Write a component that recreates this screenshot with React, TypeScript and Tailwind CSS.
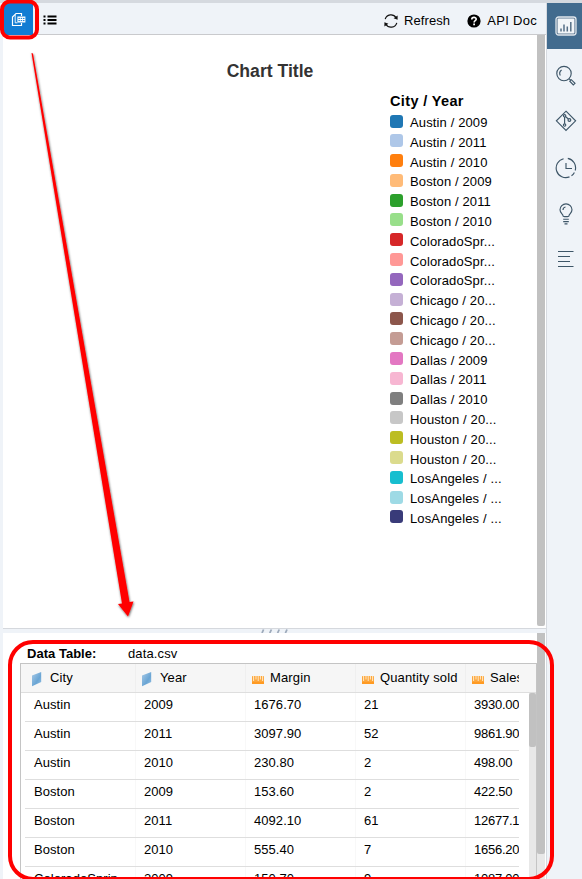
import React from "react";

const legend: [string, string][] = [
  ["Austin / 2009", "#1f77b4"],
  ["Austin / 2011", "#aec7e8"],
  ["Austin / 2010", "#ff7f0e"],
  ["Boston / 2009", "#ffbb78"],
  ["Boston / 2011", "#2ca02c"],
  ["Boston / 2010", "#98df8a"],
  ["ColoradoSpr...", "#d62728"],
  ["ColoradoSpr...", "#ff9896"],
  ["ColoradoSpr...", "#9467bd"],
  ["Chicago / 20...", "#c5b0d5"],
  ["Chicago / 20...", "#8c564b"],
  ["Chicago / 20...", "#c49c94"],
  ["Dallas / 2009", "#e377c2"],
  ["Dallas / 2011", "#f7b6d2"],
  ["Dallas / 2010", "#7f7f7f"],
  ["Houston / 20...", "#c7c7c7"],
  ["Houston / 20...", "#bcbd22"],
  ["Houston / 20...", "#dbdb8d"],
  ["LosAngeles / ...", "#17becf"],
  ["LosAngeles / ...", "#9edae5"],
  ["LosAngeles / ...", "#393b79"],
];

const columns: [string, "dim" | "measure"][] = [
  ["City", "dim"],
  ["Year", "dim"],
  ["Margin", "measure"],
  ["Quantity sold", "measure"],
  ["Sales", "measure"],
];

const rows = [
  ["Austin", "2009", "1676.70", "21", "3930.00"],
  ["Austin", "2011", "3097.90", "52", "9861.90"],
  ["Austin", "2010", "230.80", "2", "498.00"],
  ["Boston", "2009", "153.60", "2", "422.50"],
  ["Boston", "2011", "4092.10", "61", "12677.1"],
  ["Boston", "2010", "555.40", "7", "1656.20"],
  ["ColoradoSprin", "2009", "150.70", "9", "1087.00"],
];

function DimensionIcon() {
  return (
    <svg width="12" height="16" viewBox="0 0 12 16" className="shrink-0">
      <defs>
        <linearGradient id="dim" x1="0" y1="0" x2="1" y2="1">
          <stop offset="0" stopColor="#a9cbe8" />
          <stop offset="0.6" stopColor="#6aa5d4" />
          <stop offset="1" stopColor="#94bfe2" />
        </linearGradient>
      </defs>
      <path d="M1 4.6 10.2 1V11L1 15.2Z" fill="url(#dim)" />
    </svg>
  );
}

function MeasureIcon() {
  return (
    <svg width="14" height="16" viewBox="0 0 14 16" className="shrink-0">
      <rect x="1" y="5" width="12" height="8" rx="0.6" fill="#fda63a" />
      <path d="M1 11H13V13H1Z" fill="#ff9a22" />
      <path d="M2.6 5V10M5 5V8.5M7.2 5V10M9.4 5V8.5M11.6 5V10" stroke="#fff0d8" strokeWidth="0.9" />
    </svg>
  );
}

function Toolbar() {
  return (
    <div className="flex h-8 shrink-0 border-b border-[#c9cacd] bg-[#eff3f8]">
      <div className="ml-px flex h-8 w-[29px] items-center justify-center bg-[#117cd3]">
        <svg width="15" height="16" viewBox="0 0 15 16" fill="none" stroke="#fff" className="mt-0.5">
          <path d="M10.5 4V1.5H5L1.5 5V13.5H10.5V11" strokeWidth="1.2" />
          <path d="M4.2 3V10.8H6.5" strokeWidth="0.9" />
          <path d="M6.4 4.5H14.4V10.5H6.4Z" fill="#fff" stroke="none" />
          <path d="M7.4 6.4H8.9M9.7 6.4H11.2M12 6.4H13.5M7.4 8.6H8.9M9.7 8.6H11.2M12 8.6H13.5" stroke="#117cd3" strokeWidth="1" />
        </svg>
      </div>
      <svg width="15" height="10" viewBox="0 0 15 10" className="ml-[10px] mt-[12px]">
        <path d="M0.5 1.5H2.5M0.5 5H2.5M0.5 8.5H2.5M4.5 1.5H13.5M4.5 5H13.5M4.5 8.5H13.5" stroke="#000" strokeWidth="1.8" />
      </svg>
      <div className="ml-auto flex h-8 items-center pb-px pr-[9px] pt-1 text-[13px] tracking-[0.22px]">
        <svg width="16" height="16" viewBox="0 0 16 16" fill="none" stroke="#111" strokeWidth="1.2">
          <path d="M2.2 6.2A6 6 0 0 1 13.1 4.7M13.8 9.8A6 6 0 0 1 2.9 11.3" />
          <path d="M14.6 2.5V6.7L10.6 5.3ZM1.4 13.5V9.3L5.4 10.7Z" fill="#111" stroke="none" />
        </svg>
        <span className="ml-[5px] tracking-[0.1px]">Refresh</span>
        <svg width="14" height="14" viewBox="0 0 14 14" className="ml-[17px]">
          <circle cx="7" cy="7" r="6.6" fill="#000" />
          <path d="M4.8 5.4C4.8 2.7 9.2 2.8 9.2 5.2 9.2 6.7 7.1 6.6 7.1 8.4" fill="none" stroke="#fff" strokeWidth="1.6" />
          <path d="M6.2 9.6H8V11.3H6.2Z" fill="#fff" />
        </svg>
        <span className="ml-[6px] tracking-[0.3px]">API Doc</span>
      </div>
    </div>
  );
}

function ChartPanel() {
  return (
    <div className="flex h-[593px] shrink-0">
      <div className="w-[534px] pt-[25px]">
        <h1 className="h-[32px] text-center text-[17.6px] font-bold leading-[22px] text-[#333]">Chart Title</h1>
        <div className="ml-[387px] w-[140px]">
          <h2 className="h-[21px] text-[14.5px] font-bold leading-[18px] tracking-[0.36px]">City / Year</h2>
          {legend.map(([name, color], i) => (
            <div key={i} className="flex h-[19.8px] text-[13px] leading-[20.4px] tracking-[0.13px]">
              <i className="mr-[7px] mt-[1.5px] size-[13px] shrink-0 rounded-[3px]" style={{ backgroundColor: color }} />
              <span className="whitespace-nowrap">{name}</span>
            </div>
          ))}
        </div>
      </div>
      <div className="h-[591px] w-2 rounded-b-[2px] bg-[#c1c1c1]" />
    </div>
  );
}

function DataTable() {
  return (
    <div className="flex h-[246px] shrink-0 bg-white">
      <div className="flex w-[534px] flex-col pl-[17px]">
        <div className="flex h-[30px] shrink-0 pl-[7px] pt-[13px] text-[13px] leading-[16px] tracking-[0.12px]">
          <b className="w-[101px] tracking-[0.02px]">Data Table:</b>
          <span>data.csv</span>
        </div>
        <div className="flex min-h-0 flex-1 flex-col overflow-hidden border-x border-t border-[#c4c4c4]">
          <div className="flex h-[29px] shrink-0 border-b border-[#dedede] bg-[#f6f6f6]">
            <div className="flex w-[498px] overflow-hidden">
              {columns.map(([name, kind], i) => (
                <div
                  key={name}
                  className={`flex h-7 shrink-0 items-start pt-[7px] text-[13px] leading-[14px] tracking-[0.13px] ${i ? "w-[110px] border-l border-[#efefef] pl-[5px]" : "w-[114px] pl-[10px]"}`}
                >
                  {kind === "dim" ? <DimensionIcon /> : <MeasureIcon />}
                  <span className={kind === "dim" ? "ml-[7px] whitespace-nowrap" : "ml-[5px] whitespace-nowrap"}>{name}</span>
                </div>
              ))}
            </div>
          </div>
          <div className="flex min-h-0 flex-1">
            <div className="ml-1 w-[494px] overflow-hidden">
              {rows.map((row, r) => (
                <div key={r} className="flex h-[29px] w-[494px] border-b border-[#dedede] text-[13px] leading-[23px] tracking-[0.06px]">
                  {row.map((cell, c) => (
                    <div
                      key={c}
                      className={`h-7 shrink-0 ${c ? "border-l border-[#f8f8f8] pl-2" : "pl-[9px]"} ${c === 4 ? "w-[54px] tracking-[-0.25px]" : "w-[110px]"}`}
                    >
                      {cell}
                    </div>
                  ))}
                </div>
              ))}
            </div>
            <div className="ml-auto w-[7px] bg-[#e8e8e8]">
              <div className="h-[54px] rounded-[2px] bg-[#c1c1c1]" />
            </div>
          </div>
        </div>
      </div>
      <div className="w-2 bg-[#e8e8e8]">
        <div className="h-[221px] rounded-b-[2px] bg-[#c1c1c1]" />
      </div>
    </div>
  );
}

function Sidebar() {
  const s = { fill: "none", stroke: "#3e5668", strokeWidth: 1.15 };
  return (
    <div className="flex w-9 shrink-0 flex-col items-center border-l border-[#d6dae0] bg-[#eff3f8]">
      <div className="flex h-[46px] w-full items-center justify-center bg-[#426b8e] pl-[3px]">
        <svg width="22" height="20" viewBox="0 0 22 20" fill="none">
          <rect x="1" y="1" width="20" height="18" rx="2.5" fill="#5c7690" stroke="#dfe6ec" strokeWidth="1.3" />
          <rect x="2.6" y="2.6" width="16.8" height="14.8" rx="1" fill="#f2f5f8" />
          <path d="M6 12.5V15.5M9 8.5V15.5M12.3 10.5V15.5M15.8 6V15.5" stroke="#566f86" strokeWidth="1.5" />
        </svg>
      </div>
      <div className="flex flex-col items-center pl-[3px] pt-4">
        <svg width="22" height="22" viewBox="0 0 22 22" {...s}>
          <circle cx="9" cy="8.5" r="7.2" />
          <path d="M5.3 10.5A4.3 4.3 0 0 1 6.6 5M14.2 13.8 15.6 15.2M14.8 16.2 16.3 14.7 20 18.3 18.3 19.9Z" />
        </svg>
        <svg width="22" height="22" viewBox="0 0 22 22" {...s} className="mt-[23px]">
          <path d="M11 1.2 20.6 10.8 11 20.4 1.4 10.8Z" />
          <path d="M9.6 7V13.8M10.7 6.7 13.4 9" />
          <circle cx="9.6" cy="5.8" r="1.2" />
          <circle cx="9.6" cy="15" r="1.2" />
          <circle cx="14.4" cy="10" r="1.4" />
        </svg>
        <svg width="22" height="22" viewBox="0 0 22 22" {...s} className="mt-[25px]">
          <path d="M8.6 1.7A9.6 9.6 0 1 0 14.5 19.9M12.8 1.4A9.6 9.6 0 0 1 20.2 13.5M19.4 15.4A9.6 9.6 0 0 1 16.5 18.8M11 6V11.5H17" />
        </svg>
        <svg width="20" height="22" viewBox="0 0 20 22" {...s} className="mt-[24px]">
          <path d="M7.2 13.2C7 10.8 4 10 4 6.8A6 6 0 0 1 16 6.8C16 10 13 10.8 12.8 13.2Q10 14.2 7.2 13.2ZM7 7A3 3 0 0 1 9.5 4M7.2 16.2H12.8M7.2 18.6H12.8M8.5 20.9H11.5" />
        </svg>
        <svg width="18" height="18" viewBox="0 0 18 18" {...s} className="mt-[25px]">
          <path d="M1 1.5H16.5M1 6.5H13M1 11.5H13M1 16.5H16.5" />
        </svg>
      </div>
    </div>
  );
}

export default function App() {
  return (
    <div className="relative flex h-[879px] w-[582px] flex-col overflow-hidden bg-[#eff3f8] font-['Liberation_Sans',Arial,sans-serif] text-black">
      <div className="h-[3px] shrink-0 bg-[#d5d9df]" />
      <div className="flex min-h-0 flex-1">
        <div className="w-[3px] shrink-0" />
        <div className="flex w-[543px] shrink-0 flex-col">
          <Toolbar />
          <div className="border-b border-[#d5d8dd] bg-white">
            <ChartPanel />
          </div>
          <div className="flex h-1 shrink-0 justify-center gap-1 bg-[#eff3f8]">
            <svg width="28" height="4" viewBox="0 0 28 4">
              <path d="M1 4 2.6 0.5M8.8 4 10.4 0.5M16.6 4 18.2 0.5M24.4 4 26 0.5" stroke="#9daabb" strokeWidth="1.8" />
            </svg>
          </div>
          <DataTable />
        </div>
        <Sidebar />
      </div>
      <svg width="582" height="879" viewBox="0 0 582 879" className="pointer-events-none absolute inset-0">
        <defs>
          <filter id="shade" x="-20%" y="-5%" width="140%" height="110%">
            <feDropShadow dx="0.5" dy="1" stdDeviation="1.3" floodColor="#000" floodOpacity="0.65" />
          </filter>
        </defs>
        <rect x="2" y="1.5" width="35" height="36" rx="8" fill="none" stroke="#f00" strokeWidth="4" />
        <rect x="10" y="642" width="542" height="237" rx="23" fill="none" stroke="#f00" strokeWidth="4" />
        <path d="M31.5 53 33 53.5 129.5 602 133.5 601.5 128 616.5 118 604 122 603.5Z" fill="#f00" filter="url(#shade)" />
      </svg>
    </div>
  );
}
